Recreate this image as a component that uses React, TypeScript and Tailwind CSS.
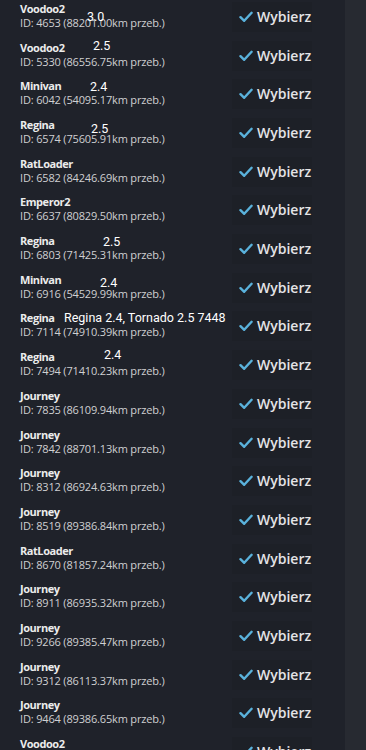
import React from "react";

type Row = { name: string; id: string; km: string; note?: string; nx?: number; ny?: number };

const rows: Row[] = [
  { name: "Voodoo2", id: "4653", km: "88201.00", note: "3.0", nx: 87, ny: 11 },
  { name: "Voodoo2", id: "5330", km: "86556.75", note: "2.5", nx: 93, ny: 2 },
  { name: "Minivan", id: "6042", km: "54095.17", note: "2.4", nx: 90, ny: 4.5 },
  { name: "Regina", id: "6574", km: "75605.91", note: "2.5", nx: 91, ny: 7 },
  { name: "RatLoader", id: "6582", km: "84246.69" },
  { name: "Emperor2", id: "6637", km: "80829.50" },
  { name: "Regina", id: "6803", km: "71425.31", note: "2.5", nx: 103, ny: 4.5 },
  { name: "Minivan", id: "6916", km: "54529.99", note: "2.4", nx: 100, ny: 7 },
  { name: "Regina", id: "7114", km: "74910.39", note: "Regina 2.4, Tornado 2.5 7448", nx: 64, ny: 3 },
  { name: "Regina", id: "7494", km: "71410.23", note: "2.4", nx: 104, ny: 1.5 },
  { name: "Journey", id: "7835", km: "86109.94" },
  { name: "Journey", id: "7842", km: "88701.13" },
  { name: "Journey", id: "8312", km: "86924.63" },
  { name: "Journey", id: "8519", km: "89386.84" },
  { name: "RatLoader", id: "8670", km: "81857.24" },
  { name: "Journey", id: "8911", km: "86935.32" },
  { name: "Journey", id: "9266", km: "89385.47" },
  { name: "Journey", id: "9312", km: "86113.37" },
  { name: "Journey", id: "9464", km: "89386.65" },
  { name: "Voodoo2", id: "9788", km: "88201.00" },
];

function Check() {
  return (
    <svg width="14" height="12" viewBox="0 0 14 12" className="shrink-0">
      <path d="M1.5 6.2 L5.2 9.8 L12.6 1.8" fill="none" stroke="#5ab2dc" strokeWidth="2.4" strokeLinecap="round" strokeLinejoin="round" />
    </svg>
  );
}

export default function App() {
  return (
    <div className="w-[366px] h-[750px] overflow-hidden bg-[#1f222a] flex" style={{ fontFamily: "'Open Sans', sans-serif" }}>
      <div className="flex-1 flex flex-col mt-[-2.4px]">
        {rows.map((r, i) => (
          <div key={i} className="relative h-[38.7px] shrink-0 flex items-center">
            <div className="pl-[20px] w-[232px] flex flex-col -mt-[2px]">
              <div className="text-[11px] leading-[14px] font-bold tracking-[-0.04em] text-[#ececec]">{r.name}</div>
              <div className="text-[11px] leading-[14px] tracking-[-0.015em] text-[#cfd0d2]">
                ID: {r.id} ({r.km}km przeb.)
              </div>
            </div>
            <div className="h-[30px] w-[80px] bg-[#1d2027] flex items-center gap-[4px] pl-[7px]">
              <Check />
              <span className="text-[14px] leading-none font-semibold text-[#e4e4e6]">Wybierz</span>
            </div>
            {r.note && (
              <div
                className="absolute text-[12.5px] leading-[15px] text-white whitespace-nowrap"
                style={{ left: r.nx, top: r.ny, fontFamily: "Roboto, sans-serif" }}
              >
                {r.note}
              </div>
            )}
          </div>
        ))}
      </div>
      <div className="w-[21px] bg-[#272a31]" />
    </div>
  );
}
